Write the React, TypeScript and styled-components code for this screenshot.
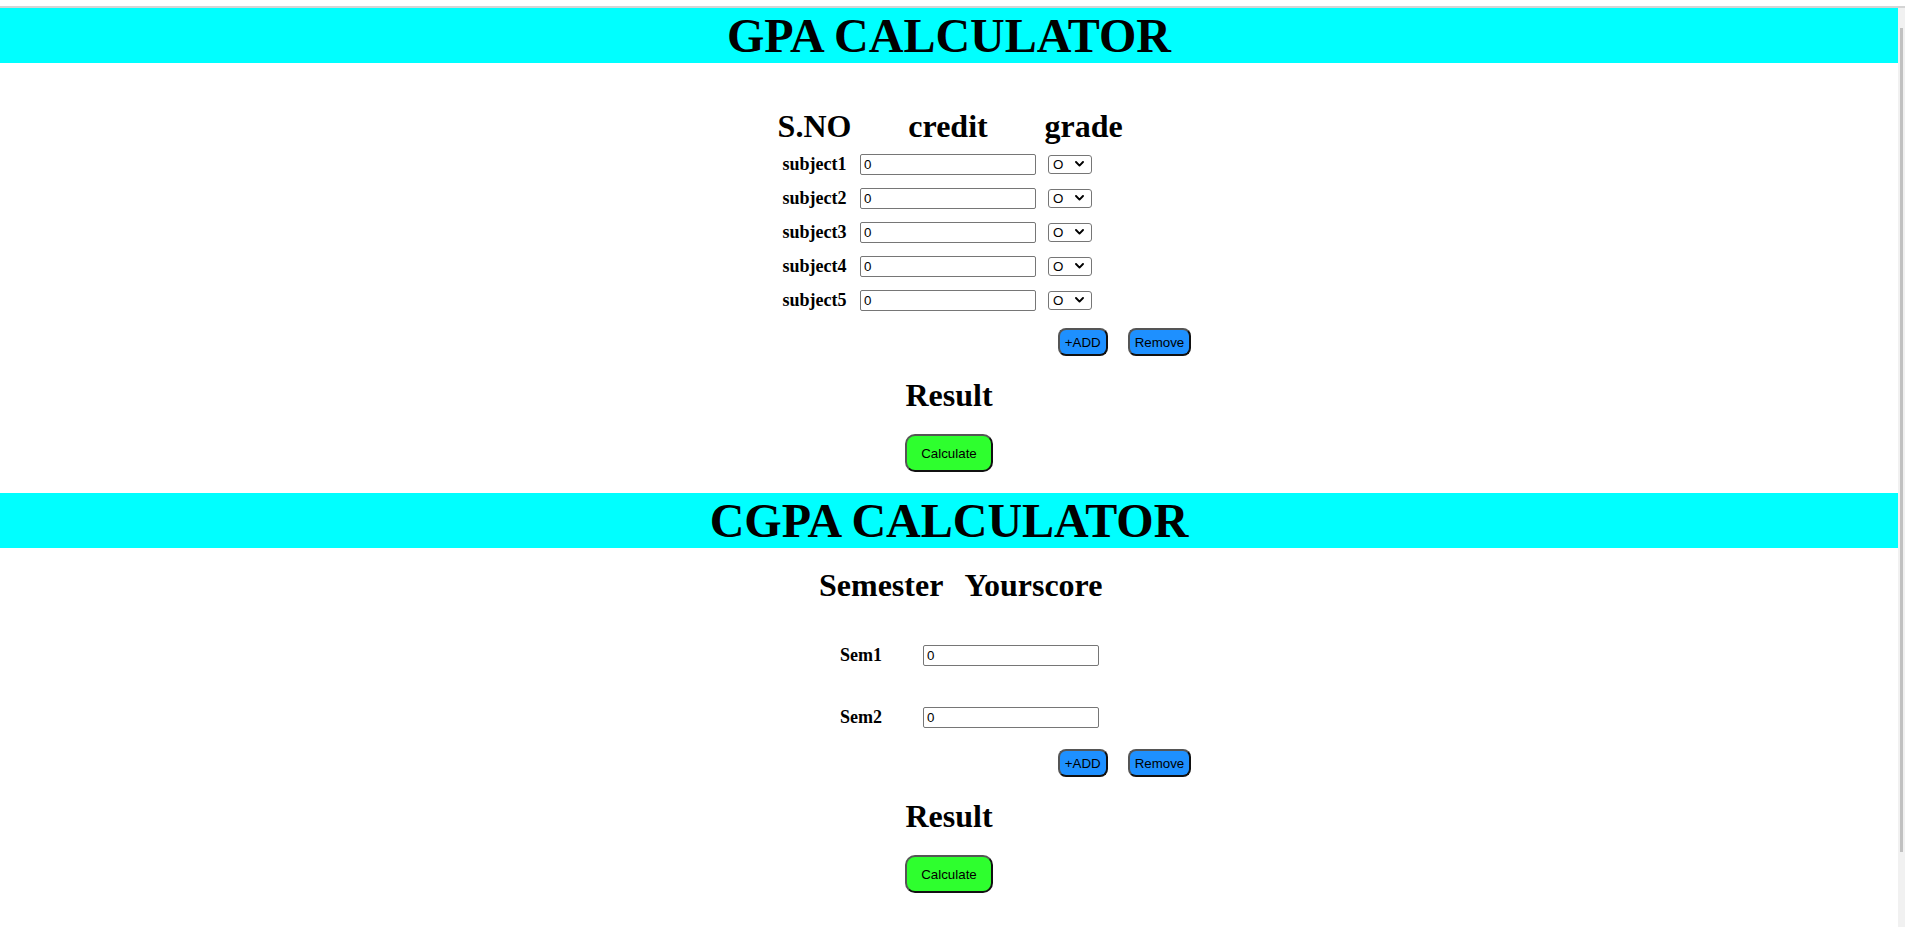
import React, { useState } from "react";
import styled, { createGlobalStyle } from "styled-components";

const GlobalStyle = createGlobalStyle`
  html, body {
    margin: 0;
    padding: 0;
    height: 100%;
    overflow: hidden;
    background: #ffffff;
  }
  body {
    font-family: "Liberation Serif", "Times New Roman", serif;
    color: #000000;
  }
  #root {
    height: 100%;
  }
`;

const Frame = styled.div`
  height: 100vh;
  display: flex;
  flex-direction: column;
`;

const TopStrip = styled.div`
  flex: none;
  height: 6px;
  background: #ffffff;
  border-bottom: 2px solid #d4d4d4;
`;

const Viewport = styled.div`
  flex: 1;
  min-height: 0;
  display: flex;
`;

const Scroller = styled.main`
  flex: 1;
  min-width: 0;
  overflow-y: auto;
  overflow-x: hidden;
  scrollbar-width: none;
`;

const ScrollRail = styled.div`
  flex: none;
  width: 7px;
  background: #f1f1f1;
  padding-top: 20px;
  box-sizing: border-box;
`;

const ScrollThumb = styled.div`
  width: 3px;
  height: 824px;
  margin-left: 2px;
  background: #c1c1c1;
`;

const Page = styled.div`
  display: flex;
  flex-direction: column;
  align-items: center;
  padding-bottom: 100px;
`;

const Banner = styled.h1<{ $mt: number }>`
  align-self: stretch;
  margin: ${(p) => p.$mt}px 0 0;
  height: 55px;
  background: #00ffff;
  font-size: 48px;
  line-height: 55px;
  font-weight: 700;
  text-align: center;
  white-space: nowrap;
`;

const GpaTable = styled.div`
  width: 343px;
  margin-top: 45px;
  display: flex;
  flex-direction: column;
`;

const GpaGrid = styled.div`
  display: grid;
  grid-template-columns: 74px 176px 76px;
  column-gap: 8.5px;
  align-items: center;
`;

const HeaderRow = styled(GpaGrid)`
  height: 37px;
  margin-bottom: 9px;
`;

const ColumnHead = styled.h2<{ $align?: "center" | "start" }>`
  margin: 0;
  font-size: 32px;
  line-height: 37px;
  font-weight: 700;
  justify-self: ${(p) => p.$align ?? "center"};
  white-space: nowrap;
`;

const RowList = styled.div`
  display: flex;
  flex-direction: column;
  gap: 13px;
`;

const SubjectRow = styled(GpaGrid)`
  height: 21px;
`;

const RowLabel = styled.h3`
  margin: 0;
  font-size: 18px;
  line-height: 21px;
  font-weight: 700;
  justify-self: center;
  white-space: nowrap;
`;

const NumberField = styled.input`
  box-sizing: border-box;
  width: 176px;
  height: 21px;
  margin: 0;
  padding: 1px 3px;
  border: 1px solid #767676;
  border-radius: 2px;
  background: #ffffff;
  color: #000000;
  font: 13.3333px "Liberation Sans", Arial, sans-serif;
  outline: none;
`;

const SelectWrap = styled.span`
  position: relative;
  display: inline-flex;
  justify-self: start;
  margin-left: 3.5px;
`;

const GradeSelect = styled.select`
  appearance: none;
  -webkit-appearance: none;
  box-sizing: border-box;
  width: 44px;
  height: 19px;
  margin: 0;
  padding: 0 0 0 4px;
  border: 1px solid #767676;
  border-radius: 3px;
  background: #ffffff;
  color: #000000;
  font: 13.3333px "Liberation Sans", Arial, sans-serif;
  outline: none;
`;

const Chevron = styled.svg`
  position: absolute;
  right: 8px;
  top: 6px;
  width: 9px;
  height: 6px;
  pointer-events: none;
`;

const ButtonRow = styled.div<{ $mt: number }>`
  align-self: stretch;
  display: flex;
  justify-content: center;
  gap: 20px;
  padding-left: 351px;
  margin-top: ${(p) => p.$mt}px;
`;

const ActionButton = styled.button`
  box-sizing: border-box;
  height: 28px;
  margin: 0;
  padding: 0 5px;
  border: 2px solid;
  border-color: #555555 #111111 #111111 #555555;
  border-radius: 8px;
  background: #1e90ff;
  color: #000000;
  font: 13.3333px "Liberation Sans", Arial, sans-serif;
  cursor: pointer;
`;

const CalcButton = styled(ActionButton)`
  height: 38px;
  padding: 0 14px;
  border-radius: 10px;
  background: #2eff2e;
  margin-top: 20px;
`;

const ResultTitle = styled.h2`
  margin: 21px 0 0;
  font-size: 32px;
  line-height: 37px;
  font-weight: 700;
`;

const CgpaTable = styled.div`
  width: 281px;
  margin: 19px 0 0 21px;
  display: flex;
  flex-direction: column;
  gap: 41px;
`;

const CgpaHeader = styled.div`
  display: flex;
  gap: 21px;
  height: 37px;
`;

const SemRow = styled.div`
  display: flex;
  align-items: center;
  height: 21px;
`;

const SemLabel = styled.h3`
  box-sizing: border-box;
  width: 104px;
  margin: 0;
  padding-left: 21px;
  font-size: 18px;
  line-height: 21px;
  font-weight: 700;
  white-space: nowrap;
`;

const GRADES = ["O", "A+", "A", "B+", "B", "C", "U"];

function GradePicker() {
  return (
    <SelectWrap>
      <GradeSelect defaultValue="O">
        {GRADES.map((g) => (
          <option key={g} value={g}>
            {g}
          </option>
        ))}
      </GradeSelect>
      <Chevron viewBox="0 0 9 6" aria-hidden="true">
        <polyline
          points="1,1 4.5,4.6 8,1"
          fill="none"
          stroke="#000"
          strokeWidth="1.9"
          strokeLinecap="round"
          strokeLinejoin="round"
        />
      </Chevron>
    </SelectWrap>
  );
}

export default function App() {
  const [subjects, setSubjects] = useState(5);
  const [sems, setSems] = useState(2);

  return (
    <>
      <GlobalStyle />
      <Frame>
        <TopStrip />
        <Viewport>
          <Scroller>
            <Page>
              <Banner $mt={0}>GPA CALCULATOR</Banner>

              <GpaTable>
                <HeaderRow>
                  <ColumnHead>S.NO</ColumnHead>
                  <ColumnHead>credit</ColumnHead>
                  <ColumnHead $align="start">grade</ColumnHead>
                </HeaderRow>
                <RowList>
                  {Array.from({ length: subjects }, (_, i) => (
                    <SubjectRow key={i}>
                      <RowLabel>subject{i + 1}</RowLabel>
                      <NumberField type="text" defaultValue="0" />
                      <GradePicker />
                    </SubjectRow>
                  ))}
                </RowList>
              </GpaTable>

              <ButtonRow $mt={17}>
                <ActionButton onClick={() => setSubjects((n) => n + 1)}>+ADD</ActionButton>
                <ActionButton onClick={() => setSubjects((n) => Math.max(1, n - 1))}>Remove</ActionButton>
              </ButtonRow>

              <ResultTitle>Result</ResultTitle>
              <CalcButton>Calculate</CalcButton>

              <Banner $mt={21}>CGPA CALCULATOR</Banner>

              <CgpaTable>
                <CgpaHeader>
                  <ColumnHead>Semester</ColumnHead>
                  <ColumnHead>Yourscore</ColumnHead>
                </CgpaHeader>
                {Array.from({ length: sems }, (_, i) => (
                  <SemRow key={i}>
                    <SemLabel>Sem{i + 1}</SemLabel>
                    <NumberField type="text" defaultValue="0" />
                  </SemRow>
                ))}
              </CgpaTable>

              <ButtonRow $mt={21}>
                <ActionButton onClick={() => setSems((n) => n + 1)}>+ADD</ActionButton>
                <ActionButton onClick={() => setSems((n) => Math.max(1, n - 1))}>Remove</ActionButton>
              </ButtonRow>

              <ResultTitle>Result</ResultTitle>
              <CalcButton>Calculate</CalcButton>
            </Page>
          </Scroller>
          <ScrollRail>
            <ScrollThumb />
          </ScrollRail>
        </Viewport>
      </Frame>
    </>
  );
}
